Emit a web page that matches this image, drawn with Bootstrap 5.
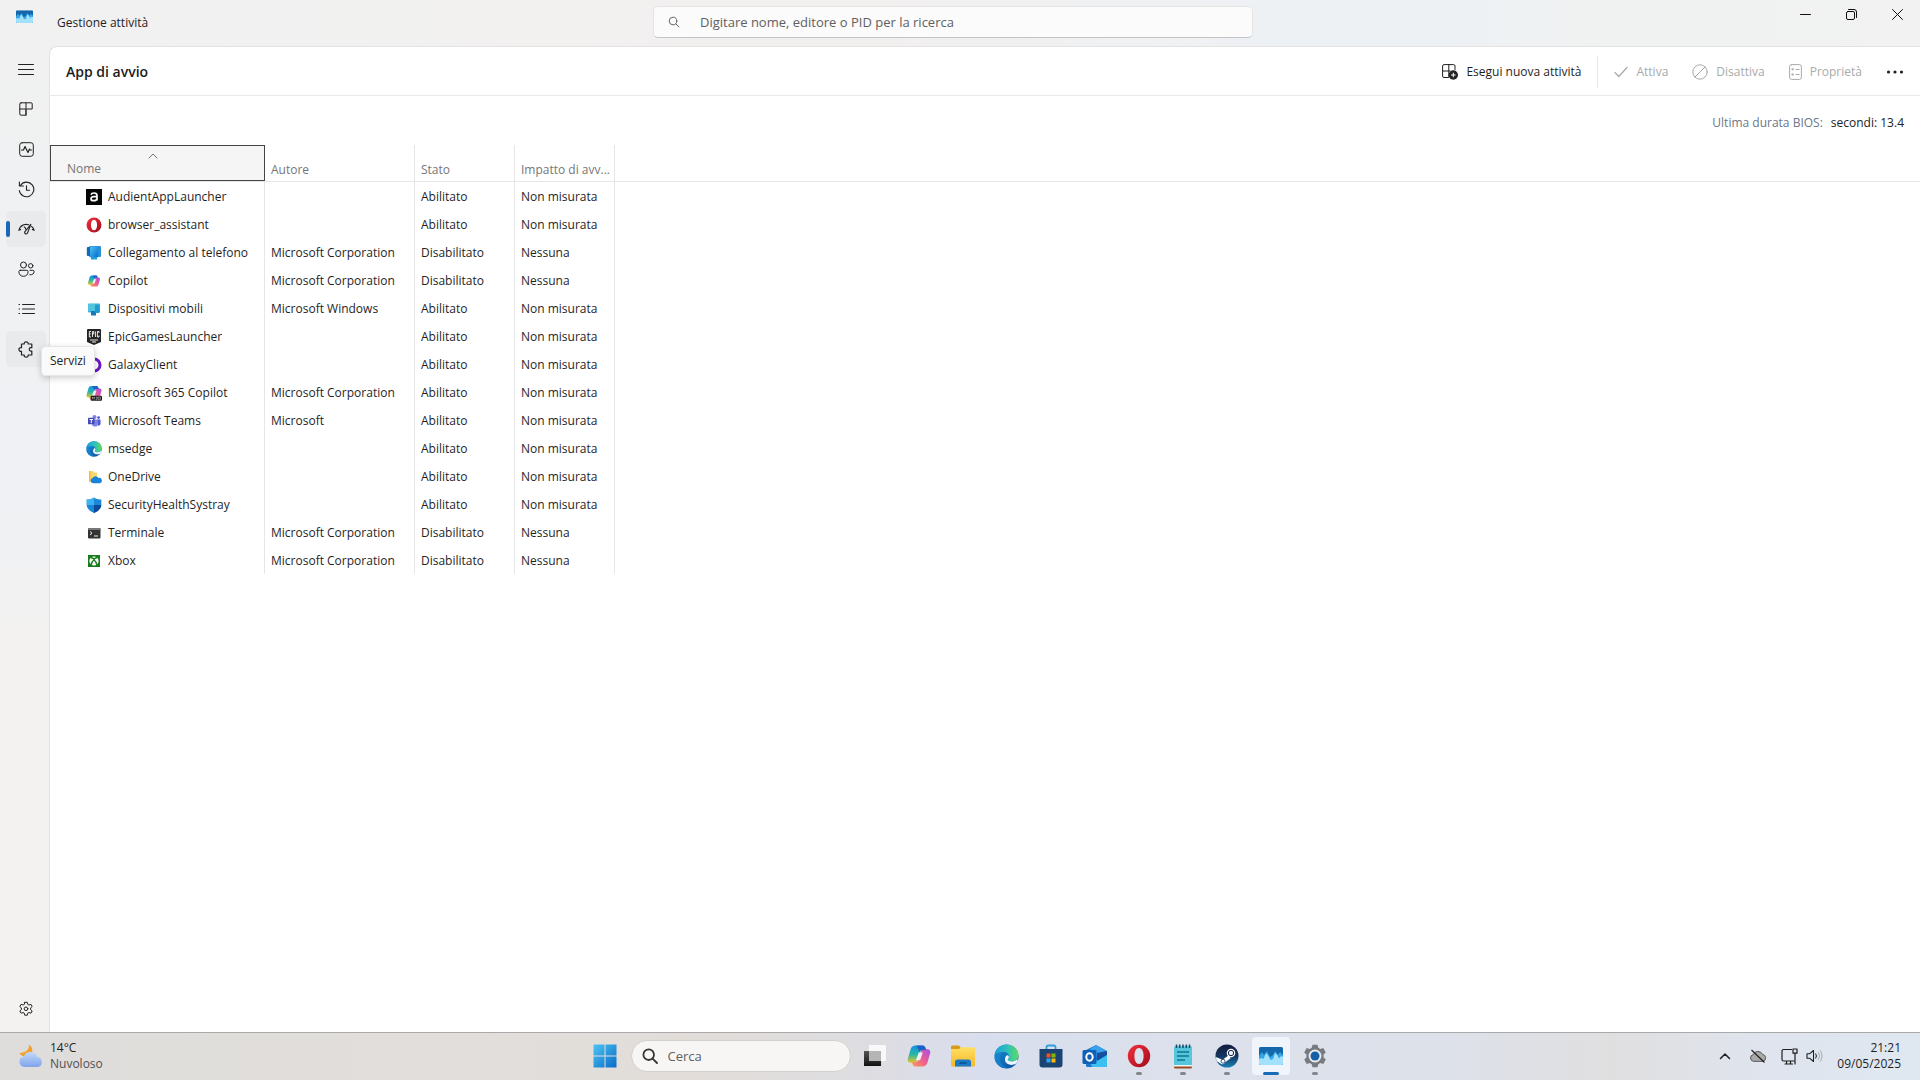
<!DOCTYPE html>
<html lang="it">
<head>
<meta charset="utf-8">
<meta name="viewport" content="width=device-width, initial-scale=1">
<title>Gestione attività</title>
<link href="https://cdn.jsdelivr.net/npm/bootstrap@5.3.0/dist/css/bootstrap.min.css" rel="stylesheet">
<style>
  body { font-family: "Open Sans", "Noto Sans", sans-serif; font-size: 12px; line-height: 16px; color: #1f1f1f; background: linear-gradient(90deg, #f1f1f1 0, #f2f0ef 45%, #eef1f4 66%, #eef1f4 75%, #f0f2f1 85%, #f1f2f1 100%); }
  svg { display: block; flex: none; }
  button { font: inherit; color: inherit; border: 0; background: none; padding: 0; }
  .ln { fill: none; stroke: currentColor; stroke-linecap: round; stroke-linejoin: round; }

  .titlebar { height: 46px; }
  .title-left { padding-top: 6px; gap: 24px; padding-left: 16px; }
  .title-left span { margin-top: 9px; }
  .finder { width: 600px; height: 32px; margin: 6px 30px 0 0; background: #fbfbfb; border: 1px solid #e4e4e4; border-bottom-color: #c4c4c4; border-radius: 5px; padding: 0 14px; gap: 20px; color: #666; }
  .finder input { border: 0; background: none; outline: 0; padding: 0; font-size: 13px; line-height: 20px; color: #5f5f5f; }
  .finder input::placeholder, .task-search input::placeholder { color: #606060; opacity: 1; }
  .win-btn { width: 46px; height: 28px; display: grid; place-items: center; color: #111; }

  .rail { flex: none; width: 49px; padding: 5px 3px 5px 6px; gap: 4px; background: linear-gradient(#f1f1f1 0, #eff1f3 25%, #eff1f4 45%, #f3f2f1 60%, #f3f2f1 100%); }
  .rail-btn { height: 36px; border-radius: 5px; display: grid; place-items: center; color: #222; position: relative; }
  .rail-btn.on, .rail-btn.hot { background: #e9eaec; }
  .rail-btn.on::before { content: ""; position: absolute; left: 0; top: 10px; width: 4px; height: 16px; border-radius: 2px; background: #1a66b8; }
  .hint { position: absolute; left: 35px; top: 15px; z-index: 5; background: #fafafa; border: 1px solid #e6e6e6; border-radius: 4px; box-shadow: 0 2px 6px rgba(0,0,0,.2); padding: 6px 8px; }

  .pane { min-width: 0; background: #fff; border: 1px solid #e2e2e2; border-width: 1px 0 0 1px; border-top-left-radius: 8px; }
  .toolbar { height: 49px; border-bottom: 1px solid #e9e9e9; padding: 1px 16px 0; }
  .toolbar h1 { font-size: 14px; line-height: 20px; font-weight: 600; color: #1c1c1c; }
  .tool { display: flex; align-items: center; height: 32px; }
  .tool:disabled { color: #a9a9a9; }
  .divider { width: 1px; height: 32px; background: #e6e6e6; }
  .bios { height: 49px; padding: 4px 16px 0; gap: 8px; color: #6d7787; }
  .bios b { font-weight: 400; color: #222; }

  .apps { width: 100%; table-layout: fixed; border-collapse: separate; border-spacing: 0; line-height: 16px; }
  .apps th, .apps td { height: 28px; padding: 1px 0 0 6px; border-right: 1px solid #e6e6e6; white-space: nowrap; overflow: hidden; }
  .apps th { height: 37px; font-weight: 400; color: #767676; vertical-align: bottom; padding-bottom: 3px; border-bottom: 1px solid #e6e6e6; }
  .apps th.sorted { padding: 0; border-right: 0; }
  .apps .rest { border-right: 0; }
  .sort-btn { display: block; width: 100%; height: 36px; padding: 3px 16px 0; border: 1px solid #444; background: #f5f5f5; text-align: left; }
  .sort-btn svg { margin: 0 auto 2px; position: relative; left: -5px; }
  .app-name { display: flex; align-items: center; gap: 6px; padding-left: 30px; }

  .taskbar { height: 48px; padding-bottom: 1px; border-top: 1px solid #a9a9ab; background: linear-gradient(90deg, #dfdddb 0, #e1dedb 25%, #e2ddd9 36%, #dddde2 46%, #d9deee 51%, #dce1ec 62%, #dde1ea 75%, #e0dfe0 84%, #dfe4ee 92%, #dfe8f1 100%); }
  .side { flex: 1 1 0; min-width: 0; }
  .task-btn { width: 44px; height: 46px; display: grid; place-items: center; position: relative; flex: none; }
  .task-btn.run::after { content: ""; position: absolute; left: 19px; bottom: 4px; width: 6px; height: 3px; border-radius: 2px; background: #85868b; }
  .task-btn.cur::before { content: ""; position: absolute; inset: 4px 3px; background: #f0f4fb; border-radius: 4px; }
  .task-btn.cur::after { content: ""; position: absolute; left: 14px; bottom: 4px; width: 16px; height: 3px; border-radius: 2px; background: #1a6cb5; }
  .task-btn svg { position: relative; }
  .task-search { width: 220px; height: 32px; border-radius: 16px; border: 1px solid #d3d0ce; background: #f8f6f5; padding: 0 10px; gap: 10px; margin: 0 2px 0 4px; color: #333; }
  .task-search input { border: 0; background: none; outline: 0; padding: 0; font-size: 13px; line-height: 20px; width: 150px; }
  .weather { padding-left: 18px; gap: 6px; line-height: 16px; }
  .sky { color: #505050; }
  .tray { padding-right: 19px; gap: 14px; }
</style>
<script src="https://cdn.jsdelivr.net/npm/bootstrap@5.3.0/dist/js/bootstrap.bundle.min.js"></script>
</head>
<body class="vh-100 d-flex flex-column overflow-hidden">

<svg width="0" height="0" class="position-absolute" aria-hidden="true">
  <defs>
    <linearGradient id="gEdge" x1="0" y1="0" x2="1" y2="1"><stop offset="0" stop-color="#1b8fd6"/><stop offset="1" stop-color="#0b4d9c"/></linearGradient>
    <linearGradient id="gEdge2" x1="0" y1="0" x2="1" y2="0"><stop offset="0" stop-color="#1e9be0"/><stop offset=".55" stop-color="#2fc2b8"/><stop offset="1" stop-color="#5edb60"/></linearGradient>
    <linearGradient id="gOpera" x1="0" y1="0" x2="1" y2="1"><stop offset="0" stop-color="#f5313c"/><stop offset="1" stop-color="#a00c1b"/></linearGradient>
    <linearGradient id="gBlue" x1="0" y1="0" x2="1" y2="1"><stop offset="0" stop-color="#4cc4f2"/><stop offset="1" stop-color="#0a6bc8"/></linearGradient>
    <linearGradient id="gCopA" x1="0" y1="0" x2="0" y2="1"><stop offset="0" stop-color="#1a8fe6"/><stop offset=".5" stop-color="#22b8a8"/><stop offset="1" stop-color="#e8c42a"/></linearGradient>
    <linearGradient id="gCopB" x1="1" y1="0" x2="0" y2="1"><stop offset="0" stop-color="#a450e8"/><stop offset=".5" stop-color="#ee5d92"/><stop offset="1" stop-color="#fb9a50"/></linearGradient>
    <linearGradient id="gFold" x1="0" y1="0" x2="0" y2="1"><stop offset="0" stop-color="#ffdf63"/><stop offset="1" stop-color="#f5b92a"/></linearGradient>
    <linearGradient id="gCloud" x1="0" y1="0" x2="0" y2="1"><stop offset="0" stop-color="#c3d9fb"/><stop offset="1" stop-color="#7fa4ea"/></linearGradient>
    <linearGradient id="gSteam" x1="0" y1="0" x2="0" y2="1"><stop offset="0" stop-color="#131b3c"/><stop offset=".5" stop-color="#15355f"/><stop offset="1" stop-color="#1b80b8"/></linearGradient>
    <linearGradient id="gDark" x1="0" y1="0" x2="0" y2="1"><stop offset="0" stop-color="#555"/><stop offset="1" stop-color="#111"/></linearGradient>
    <symbol id="i-edge" viewBox="0 0 24 24">
      <circle cx="12" cy="12" r="11.6" fill="url(#gEdge)"/>
      <path d="M.6 10.5C1.5 4.500 6.300.4 12 .4c6.600 0 11.600 4.600 11.600 10.200 0 3.800-2.900 6.200-6.200 6.200-2.600 0-4.200-.9-4.200-1.900 0-.8 1.200-1.100 1.200-3 0-2.300-2.200-4.200-5.200-4.200C5.600 7.700 2.200 8.700.6 10.500z" fill="url(#gEdge2)"/>
      <path d="M9.200 8.200C6 9.800 5 13 6 16.200c1.200 4.200 5 6.700 8.700 7-6 .9-11.700-2.500-13.600-7.500C-.4 11.200 4 7.500 9.200 8.200z" fill="#1785cf" opacity=".75"/>
      <path d="M13.200 14.900c0 1 1.600 1.900 4.200 1.900 2 0 4-.9 5.200-2.400l.3 1.600c-.4 1-1 2-1.600 2.700-2.200 1.400-5.400 1.900-8 .6-3-1.500-3.700-5.500-1.300-8.200 1.100-.8 2.300.3 2.300 1.300 0 1.300-1.100 1.700-1.100 2.500z" fill="#eef5fb"/>
    </symbol>
    <symbol id="i-opera" viewBox="0 0 24 24"><path fill="url(#gOpera)" fill-rule="evenodd" d="M12 .8a11.200 11.200 0 1 0 0 22.400A11.200 11.200 0 0 0 12 .8zm0 3.200c2.900 0 4.600 3.500 4.600 8s-1.700 8-4.600 8-4.600-3.500-4.600-8S9.100 4 12 4z"/></symbol>
    <symbol id="i-copilot" viewBox="0 0 24 24">
      <path d="M8.500 1.500h7c1.600 0 2.500 1 3 2.500l.6 2h-3.400c-1.700 0-2.600 1-3.100 2.600l-2.400 7.800c-.5 1.600-1.500 2.400-3 2.400H3.700C1.300 18.800.2 17 .9 14.600L3.700 5c.7-2.300 2.300-3.500 4.800-3.500z" fill="url(#gCopA)"/>
      <path d="M15.500 22.500h-7c-1.600 0-2.500-1-3-2.500l-.5-1.800h3.300c1.700 0 2.600-1 3.100-2.600l2.400-7.800c.5-1.600 1.500-2.500 3-2.500h3.500c2.400 0 3.500 1.900 2.800 4.200L20.300 19c-.8 2.300-2.300 3.500-4.800 3.500z" fill="url(#gCopB)"/>
      <path d="M11.800 8.600h4l-2.700 7.600H8.900z" fill="#eceffa"/>
      <path d="M9.500 1.500h6c1.600 0 2.500 1 3 2.500l.6 2h-3.400c-1.500 0-2.500.8-3 2.200z" fill="#1b4fc0" opacity=".75"/>
    </symbol>
    <symbol id="i-taskmgr" viewBox="0 0 24 18">
      <rect width="24" height="18" rx="1.500" fill="#1467ab"/>
      <path d="M0 9l3-4 2 3 3-4 3 6 3-2 2-4 3 4 2-3 3 3v8.500a1.500 1.500 0 0 1-1.500 1.500h-21A1.500 1.500 0 0 1 0 16.500z" fill="#35a4e4"/>
      <path d="M0 12l2.500-1 2 1L7 6l2.500 3 2 4 2.500-1 2-6 2 1.500 2 4 2-2.500 2 1v6.500a1.500 1.500 0 0 1-1.500 1.500h-21A1.500 1.500 0 0 1 0 16.500z" fill="#a2e1fb"/>
    </symbol>
    <symbol id="i-gear" viewBox="0 0 16 16">
      <path class="ln" d="M6.700 1.300h2.600l.4 2 1.200.7 2-.7 1.300 2.200-1.600 1.400v1.700l1.600 1.400-1.300 2.200-2-.7-1.200.7-.4 2H6.700l-.4-2-1.200-.7-2 .7L1.800 10l1.600-1.400V6.900L1.800 5.500l1.300-2.200 2 .7 1.200-.7z"/><circle class="ln" cx="8" cy="7.800" r="1.800"/>
    </symbol>
  </defs>
</svg>

<header class="titlebar d-flex">
  <div class="title-left side d-flex">
    <svg width="17" height="13" class="mt-1" viewBox="0 0 24 18"><use href="#i-taskmgr"/></svg>
    <span>Gestione attività</span>
  </div>
  <label class="finder d-flex align-items-center">
    <svg width="12" height="12" viewBox="0 0 12 12"><circle class="ln" cx="5" cy="5" r="3.800"/><path class="ln" d="M8 8l3 3"/></svg>
    <input class="flex-fill" type="search" aria-label="Cerca" placeholder="Digitare nome, editore o PID per la ricerca">
  </label>
  <div class="side d-flex justify-content-end">
    <button class="win-btn" aria-label="Riduci a icona"><svg width="11" height="11" viewBox="0 0 11 11"><path class="ln" d="M.5 5.500h10"/></svg></button>
    <button class="win-btn" aria-label="Ripristina"><svg width="11" height="11" viewBox="0 0 11 11"><rect class="ln" x=".5" y="2.500" width="8" height="8" rx="1.500"/><path class="ln" d="M2.500.5H8A2.500 2.500 0 0 1 10.500 3v5.500"/></svg></button>
    <button class="win-btn" aria-label="Chiudi"><svg width="11" height="11" viewBox="0 0 11 11"><path class="ln" d="M.5.5l10 10M10.500.5l-10 10"/></svg></button>
  </div>
</header>

<div class="d-flex flex-fill">
  <nav class="rail d-flex flex-column" aria-label="Pagine">
    <button class="rail-btn" aria-label="Apri spostamento"><svg width="16" height="16" viewBox="0 0 16 16"><path class="ln" d="M.5 3.500h15M.5 8.500h15M.5 13.500h15"/></svg></button>
    <button class="rail-btn" aria-label="Processi"><svg width="14" height="14" viewBox="0 0 14 14"><path class="ln" d="M2 .8h10.200a1 1 0 0 1 1 1v5.200H.8V2A1.200 1.200 0 0 1 2 .8zM.8 7v5a1.200 1.200 0 0 0 1.200 1.200h5V.8M7 8v5.200"/></svg></button>
    <button class="rail-btn" aria-label="Prestazioni"><svg width="15" height="15" viewBox="0 0 15 15"><rect class="ln" x=".7" y=".7" width="13.600" height="13.600" rx="2.500"/><path class="ln" stroke-width="1.200" d="M2.500 8h2L6 4.500l3 6L10.500 7l.7 1h1.300"/></svg></button>
    <button class="rail-btn" aria-label="Cronologia applicazioni"><svg width="17" height="17" viewBox="0 0 17 17"><path class="ln" stroke-width="1.100" d="M2.600 4.200A7.300 7.300 0 1 1 1.300 9.500M1.400 1v4h4M8.500 4.800v4.400h3"/></svg></button>
    <button class="rail-btn on" aria-label="App di avvio"><svg width="17" height="14" viewBox="0 0 17 14"><path class="ln" stroke-width="1.100" d="M.8 8.300C2 4.500 4.800 2.400 8.300 2.400c.9 0 1.700.1 2.400.4M13.600 4.400c1.200 1 2.100 2.300 2.600 3.900M.8 8.300l1.900-.9M16.200 8.300l-1.900-.9M12.900 2.400 9.600 10.800c-.4 1-1.400 1.400-2.200 1-.8-.4-1-1.400-.5-2.200zM6.200 4.900c.9.300 1.500 1.100 1.600 2.300"/></svg></button>
    <button class="rail-btn" aria-label="Utenti"><svg width="17" height="16" viewBox="0 0 17 16"><circle class="ln" cx="5.500" cy="4" r="3"/><circle class="ln" cx="12.700" cy="4.800" r="2.200"/><path class="ln" d="M2.200 9.300h6.600c.8 0 1.300.5 1.300 1.300 0 2.800-1.700 4.700-4.600 4.700S.9 13.400.9 10.600c0-.8.500-1.300 1.300-1.300zM12 9.300h2.800c.8 0 1.300.5 1.300 1.200 0 2.200-1.600 3.500-4.300 3.300"/></svg></button>
    <button class="rail-btn" aria-label="Dettagli"><svg width="17" height="12" viewBox="0 0 17 12"><path class="ln" d="M4.500 1.500h12M4.500 6h12M4.500 10.500h12M1 1.500h.6M1 6h.6M1 10.500h.6"/></svg></button>
    <button class="rail-btn hot" aria-label="Servizi"><svg width="17" height="17" viewBox="0 0 17 17"><path class="ln" stroke-width="1.200" d="M3.500 3h2.700C6 1.700 6.900.8 8.200.8s2.200.9 2 2.200h3.600v3.700c-1.600-.5-2.500.3-2.500 1.600s.9 2.200 2.500 1.700V14h-3.600c.2 1.300-.7 2.200-2 2.200s-2.200-.9-2-2.200H3.500v-3.600C1.900 10.600.9 9.700.9 8.500s1-2.100 2.600-1.900z"/></svg><span class="hint" role="tooltip">Servizi</span></button>
    <button class="rail-btn mt-auto" aria-label="Impostazioni"><svg width="16" height="16" viewBox="0 0 16 16"><use href="#i-gear"/></svg></button>
  </nav>

  <main class="pane flex-fill">
    <div class="toolbar d-flex align-items-center">
      <h1 class="m-0 me-auto">App di avvio</h1>
      <button class="tool gap-2"><svg width="16" height="16" viewBox="0 0 16 16"><path class="ln" d="M6.500 13.500H2A1.500 1.500 0 0 1 .6 12V2A1.500 1.500 0 0 1 2 .6h9.500A1.500 1.500 0 0 1 13 2v3.500M6.800.6v12M.6 7H8"/><circle cx="11.300" cy="11" r="4.700" fill="#222"/><path d="M11.300 8.700v4.600M9 11h4.600" stroke="#fff"/></svg>Esegui nuova attività</button>
      <span class="divider mx-3"></span>
      <button class="tool gap-2" disabled><svg width="14" height="12" viewBox="0 0 14 12"><path class="ln" stroke-width="1.200" d="M1 6.500l3.800 4L13 1.500"/></svg>Attiva</button>
      <button class="tool gap-2 ms-4" disabled><svg width="16" height="16" viewBox="0 0 16 16"><circle class="ln" cx="8" cy="8" r="7.200"/><path class="ln" d="M13 3L3 13"/></svg>Disattiva</button>
      <button class="tool gap-2 ms-4" disabled><svg width="13" height="16" viewBox="0 0 13 16"><rect class="ln" x=".6" y=".6" width="11.800" height="14.800" rx="2"/><path class="ln" d="M7 5.500h3M7 10.500h3M3.300 4.700h1v1.200h-1zM3.300 9.900h1v1.200h-1z"/></svg>Proprietà</button>
      <button class="tool ms-4" aria-label="Altro"><svg width="18" height="4" viewBox="0 0 18 4" fill="#222"><circle cx="2.500" cy="2" r="1.600"/><circle cx="9" cy="2" r="1.600"/><circle cx="15.500" cy="2" r="1.600"/></svg></button>
    </div>

    <div class="bios d-flex align-items-center justify-content-end"><span>Ultima durata BIOS:</span><b>secondi: 13.4</b></div>

    <table class="apps">
      <colgroup><col style="width:215px"><col style="width:150px"><col style="width:100px"><col style="width:100px"><col></colgroup>
      <thead>
        <tr>
          <th class="sorted align-top" aria-sort="ascending"><button class="sort-btn"><svg width="10" height="6" viewBox="0 0 10 6"><path class="ln" d="M1 5l4-4 4 4"/></svg>Nome</button></th>
          <th>Autore</th><th>Stato</th><th>Impatto di avv...</th><th class="rest"></th>
        </tr>
      </thead>
      <tbody>
        <tr><td><span class="app-name"><svg width="16" height="16" viewBox="0 0 16 16"><path fill="#050505" d="M0 0h16v16H0z"/><path d="M5 5.800c.4-1.200 1.500-1.800 3-1.800 2 0 3 .9 3 2.600v5M11 7.700H7.800c-1.900 0-2.800.7-2.800 2s.9 2 2.400 2c2 0 3.600-1 3.600-2.500" fill="none" stroke="#fff" stroke-width="1.700"/></svg>AudientAppLauncher</span></td><td></td><td>Abilitato</td><td>Non misurata</td></tr>
        <tr><td><span class="app-name"><svg width="16" height="16"><use href="#i-opera"/></svg>browser_assistant</span></td><td></td><td>Abilitato</td><td>Non misurata</td></tr>
        <tr><td><span class="app-name"><svg width="16" height="16" viewBox="0 0 16 16"><rect x="3" y="1" width="12" height="11" rx="1" fill="#2490df"/><rect x=".8" y="2" width="10" height="9" rx="1" fill="#1766b8"/><rect x="4" y="1.500" width="8" height="11" rx="1" fill="url(#gBlue)"/><path fill="#1aa0e0" d="M5 12h6v2.500H5z"/></svg>Collegamento al telefono</span></td><td>Microsoft Corporation</td><td>Disabilitato</td><td>Nessuna</td></tr>
        <tr><td><span class="app-name"><svg width="16" height="16" viewBox="-3 -3 30 30"><use href="#i-copilot" width="24" height="24"/></svg>Copilot</span></td><td>Microsoft Corporation</td><td>Disabilitato</td><td>Nessuna</td></tr>
        <tr><td><span class="app-name"><svg width="16" height="16" viewBox="0 0 16 16"><rect x="2" y="2.500" width="12" height="9" rx="1" fill="#36b3d8"/><path d="M5 10h5v4.500H5z" fill="#1679b8"/><rect x="9" y="4" width="4.500" height="8" rx="1" fill="#1e9bd0"/><path d="M2 3h7v7H2z" fill="#62d0e4" opacity=".6"/></svg>Dispositivi mobili</span></td><td>Microsoft Windows</td><td>Abilitato</td><td>Non misurata</td></tr>
        <tr><td><span class="app-name"><svg width="16" height="16" viewBox="0 0 16 16"><path fill="#222" d="M2 0h12a1 1 0 0 1 1 1v12l-7 3-7-3V1a1 1 0 0 1 1-1z"/><path d="M5 2.500H3.300v5.500H5M3.300 5h1.500M6.400 8V2.500h1.300V5H6.400M9.400 2.500V8M13 4V2.500h-1.600V8H13V6.500M4 11h8M6 13h4" fill="none" stroke="#fff" stroke-width=".9"/></svg>EpicGamesLauncher</span></td><td></td><td>Abilitato</td><td>Non misurata</td></tr>
        <tr><td><span class="app-name"><svg width="16" height="16" viewBox="0 0 16 16"><circle cx="8" cy="8" r="6" fill="#fff" stroke="#6a16c4" stroke-width="3"/></svg>GalaxyClient</span></td><td></td><td>Abilitato</td><td>Non misurata</td></tr>
        <tr><td><span class="app-name"><svg width="16" height="16" viewBox="0 0 24 24"><use href="#i-copilot"/><rect x="7" y="16" width="17" height="7.500" rx="1.500" fill="#1d1b1c"/><path d="M9.500 21.500v-3.500l1.500 2 1.500-2v3.500M14.500 18h2v3.500h-2M18 21.500V18h3.500v3.500z" fill="none" stroke="#eee" stroke-width=".7"/></svg>Microsoft 365 Copilot</span></td><td>Microsoft Corporation</td><td>Abilitato</td><td>Non misurata</td></tr>
        <tr><td><span class="app-name"><svg width="16" height="16" viewBox="0 0 16 16"><circle cx="8.500" cy="4" r="2" fill="#7b83eb"/><circle cx="12.600" cy="4.600" r="1.400" fill="#5059c9"/><path d="M11 6.500h3.500v4c0 1.300-1 2.300-2.300 2.300z" fill="#5059c9"/><path d="M6 6.500h6v4.200A3 3 0 0 1 9 13.600a3 3 0 0 1-3-2.900z" fill="#7b83eb"/><rect x="2" y="4.800" width="6.500" height="6.500" rx=".6" fill="#444cb8"/><path d="M3.600 6.500H7M5.300 6.500v3.600" stroke="#fff"/></svg>Microsoft Teams</span></td><td>Microsoft</td><td>Abilitato</td><td>Non misurata</td></tr>
        <tr><td><span class="app-name"><svg width="16" height="16"><use href="#i-edge"/></svg>msedge</span></td><td></td><td>Abilitato</td><td>Non misurata</td></tr>
        <tr><td><span class="app-name"><svg width="16" height="16" viewBox="0 0 16 16"><path d="M3 2h4l1 1.500h3V13H3z" fill="#fbd66b"/><path d="M3 2h1.500v11H3z" fill="#f2b93a"/><path d="M7 14.200a2.600 2.600 0 0 1-.4-5.100A3.300 3.300 0 0 1 12.500 9a2.600 2.600 0 0 1 1.300 5.200z" fill="#1683dc"/></svg>OneDrive</span></td><td></td><td>Abilitato</td><td>Non misurata</td></tr>
        <tr><td><span class="app-name"><svg width="16" height="16" viewBox="0 0 16 16"><path d="M8 .5c2 1.500 4.500 2 7.300 2v5C15.300 11.500 12 14.500 8 16 4 14.500.7 11.500.7 7.500v-5C3.500 2.500 6 2 8 .5z" fill="#1a87d8"/><path d="M8 .5v7.500H.7V2.500C3.500 2.500 6 2 8 .5z" fill="#3eb2f0"/><path d="M8 8h7.300C15 11.700 12 14.500 8 16z" fill="#0c4a9c"/></svg>SecurityHealthSystray</span></td><td></td><td>Abilitato</td><td>Non misurata</td></tr>
        <tr><td><span class="app-name"><svg width="16" height="16" viewBox="0 0 16 16"><rect x="2" y="3" width="12.500" height="10.500" rx="1" fill="#333"/><path d="M2 4a1 1 0 0 1 1-1h10.500a1 1 0 0 1 1 1v1H2z" fill="#777"/><path d="M4 6.500l2 1.700L4 10M8 11h4" fill="none" stroke="#eee"/></svg>Terminale</span></td><td>Microsoft Corporation</td><td>Disabilitato</td><td>Nessuna</td></tr>
        <tr><td><span class="app-name"><svg width="16" height="16" viewBox="0 0 16 16"><rect x="2" y="2" width="12" height="12" fill="#177d1b"/><circle cx="8" cy="8" r="4.600" fill="#fff"/><path d="M5 12C5.500 9.800 6.500 8 8 6.700 9.500 8 10.500 9.800 11 12M4.600 4.500C6 4.600 7.200 5.300 8 6c.8-.7 2-1.400 3.400-1.500" fill="none" stroke="#177d1b" stroke-width="1.300"/></svg>Xbox</span></td><td>Microsoft Corporation</td><td>Disabilitato</td><td>Nessuna</td></tr>
      </tbody>
    </table>
  </main>
</div>

<footer class="taskbar d-flex align-items-center">
  <div class="side weather d-flex align-items-center">
    <svg width="26" height="26" viewBox="0 0 26 26"><path d="M11 1.500c.4 4.500-2.700 8.500-9.500 8.500 1.700 3.500 6.500 5 10.300 2.500 3.500-2.300 3.700-7.800-.8-11z" fill="#f0a22c"/><path d="M6.500 24a5.300 5.300 0 0 1-.7-10.500A7.200 7.200 0 0 1 19.300 14 5.100 5.100 0 0 1 20 24z" fill="url(#gCloud)"/></svg>
    <div><div>14°C</div><div class="sky">Nuvoloso</div></div>
  </div>
  <div class="d-flex align-items-center">
    <button class="task-btn" aria-label="Start"><svg width="24" height="24" viewBox="0 0 24 24"><path fill="url(#gBlue)" d="M.5.500h11v11H.5zM12.500.500h11v11h-11zM.5 12.500h11v11H.5zM12.500 12.500h11v11h-11z"/></svg></button>
    <label class="task-search d-flex align-items-center"><svg width="16" height="16" viewBox="0 0 16 16"><circle class="ln" stroke-width="1.800" cx="6.700" cy="6.700" r="5.300"/><path class="ln" stroke-width="1.800" d="M10.800 10.800L15 15"/></svg><input type="search" aria-label="Cerca nel sistema" placeholder="Cerca"></label>
    <button class="task-btn" aria-label="Visualizzazione attività"><svg width="24" height="24" viewBox="0 0 24 24"><path fill="#f8f8f8" d="M6 1h17v16H6z"/><path fill="url(#gDark)" d="M1 7h17v15H1z"/><path fill="#b5b5b5" d="M6 7h12v10H6z"/></svg></button>
    <button class="task-btn" aria-label="Copilot"><svg width="24" height="24"><use href="#i-copilot"/></svg></button>
    <button class="task-btn" aria-label="Esplora file"><svg width="26" height="24" viewBox="0 0 26 24"><path d="M1 3a1.500 1.500 0 0 1 1.500-1.500H9L11.500 5H1z" fill="#d99a17"/><path d="M1 5h8l2-1.800h12.500A1.500 1.500 0 0 1 25 4.700V21a1.500 1.500 0 0 1-1.500 1.500h-21A1.500 1.500 0 0 1 1 21z" fill="url(#gFold)"/><path d="M5 22.500V18a2.500 2.500 0 0 1 2.500-2.500h11A2.500 2.500 0 0 1 21 18v4.500z" fill="#1b7ac8"/><path d="M9.500 19h7" stroke="#0b4d91" stroke-width="1.500"/></svg></button>
    <button class="task-btn" aria-label="Microsoft Edge"><svg width="25" height="25"><use href="#i-edge"/></svg></button>
    <button class="task-btn" aria-label="Microsoft Store"><svg width="24" height="24" viewBox="0 0 24 24"><path d="M7.500 6V3.200A1.700 1.700 0 0 1 9.200 1.500h5.600a1.700 1.700 0 0 1 1.700 1.700V6" fill="none" stroke="#2f9ed8" stroke-width="1.800"/><path d="M.5 5h23v15.500a3 3 0 0 1-3 3h-17a3 3 0 0 1-3-3z" fill="#1b4472"/><path fill="#f25022" d="M7.500 9.500h4v4h-4z"/><path fill="#7fba00" d="M12.500 9.500h4v4h-4z"/><path fill="#2ea3f2" d="M7.500 14.500h4v4h-4z"/><path fill="#ffb900" d="M12.500 14.500h4v4h-4z"/></svg></button>
    <button class="task-btn" aria-label="Outlook"><svg width="26" height="24" viewBox="0 0 26 24"><path d="M4 6l10-5 11 6v14.500a1.500 1.500 0 0 1-1.500 1.500h-18A1.500 1.500 0 0 1 4 21.500z" fill="#1a78cf"/><path d="M8 5l6-4 10.500 6L15 14z" fill="#3aa2ea"/><path d="M25 7L9 20l1 3h13.500a1.500 1.500 0 0 0 1.500-1.500z" fill="#3cc0f2"/><path d="M25 7v4l-10 6V9z" fill="#164fa0"/><rect x=".5" y="6" width="14" height="14" rx="1.500" fill="#1160b8"/><ellipse cx="7.500" cy="13" rx="3.200" ry="3.700" fill="none" stroke="#fff" stroke-width="2"/></svg></button>
    <button class="task-btn run" aria-label="Opera"><svg width="24" height="24"><use href="#i-opera"/></svg></button>
    <button class="task-btn run" aria-label="Blocco note"><svg width="20" height="25" viewBox="0 0 20 25"><rect x="1" y="2" width="18" height="21" rx="1.500" fill="#55c6dc"/><path d="M1 22h18v1a1.500 1.500 0 0 1-1.500 1.500h-15A1.500 1.500 0 0 1 1 23z" fill="#9c4b1c"/><path d="M1 21h18v1.500H1z" fill="#f4f4f4"/><path d="M3.500.5V4M6.700.5V4M10 .5V4M13.300.5V4M16.500.5V4" stroke="#1b4a68" stroke-width="1.500"/><path d="M4 8h12M4 12h12M4 16h8" stroke="#147390" stroke-width="1.500"/></svg></button>
    <button class="task-btn run" aria-label="Steam"><svg width="24" height="24" viewBox="0 0 24 24"><circle cx="12" cy="12" r="11.500" fill="url(#gSteam)"/><path d="M.7 13l6.800 2.800 6.300-4.600 1.800 3-5.400 4.100c-.5 2-3.500 2.500-5 .9L1.700 17z" fill="#fff"/><circle cx="16" cy="9" r="4.300" fill="#fff"/><circle cx="16" cy="9" r="2.700" fill="#e9edf5" stroke="#15294d" stroke-width="1"/><circle cx="8" cy="17.200" r="2" fill="none" stroke="#15355f" stroke-width=".8"/></svg></button>
    <button class="task-btn cur" aria-label="Gestione attività"><svg width="24" height="18"><use href="#i-taskmgr"/></svg></button>
    <button class="task-btn run" aria-label="Impostazioni"><svg width="24" height="24" viewBox="0 0 24 24"><path d="M9.500.8h5l.8 3 2 1.200 3-.9 2.500 4.300-2.200 2.200v2.800l2.200 2.200-2.500 4.300-3-.9-2 1.200-.8 3h-5l-.8-3-2-1.200-3 .9-2.500-4.300 2.200-2.200v-2.800L1.200 8.400l2.500-4.300 3 .9 2-1.200z" fill="#777b80"/><circle cx="12" cy="12" r="6.400" fill="#e9edf2"/><circle cx="12" cy="12" r="4.500" fill="#1760a8"/></svg></button>
  </div>
  <div class="side tray d-flex align-items-center justify-content-end">
    <button class="me-1" aria-label="Mostra icone nascoste"><svg width="12" height="8" viewBox="0 0 12 8"><path class="ln" stroke-width="1.500" d="M1.500 6.500L6 2l4.500 4.500"/></svg></button>
    <button aria-label="OneDrive"><svg width="18" height="14" viewBox="0 0 18 14"><path d="M4.500 12.300a3.400 3.400 0 0 1-.2-6.700A5 5 0 0 1 13.500 5.400a3.500 3.500 0 0 1 .3 6.900z" fill="#aaa" stroke="#555"/><path d="M2.500 1l13 12.500" stroke="#222" stroke-width="1.200"/></svg></button>
    <div class="d-flex align-items-center gap-2">
      <button aria-label="Rete"><svg width="17" height="17" viewBox="0 0 17 17"><path class="ln" stroke-width="1.200" d="M10.500 1.500h-8A1.500 1.500 0 0 0 1 3v8.500A1.500 1.500 0 0 0 2.500 13H13M5.500 13v3M9.500 13v3M4 16h7.500M12 1h4v4.200h-4zM14 5.500V16"/></svg></button>
      <button aria-label="Volume"><svg width="17" height="14" viewBox="0 0 17 14"><path class="ln" stroke-width="1.100" d="M1 4.800h2.500L7.500 1.500v11L3.500 9.200H1zM9.700 5c.9 1.200.9 2.800 0 4"/><path class="ln" d="M12 3.300c2 2.200 2 5.200 0 7.400M14.200 1.700c2.500 3.300 2.500 7.300 0 10.600" opacity=".3"/></svg></button>
    </div>
    <div class="text-end">21:21<br>09/05/2025</div>
  </div>
</footer>
</body>
</html>
